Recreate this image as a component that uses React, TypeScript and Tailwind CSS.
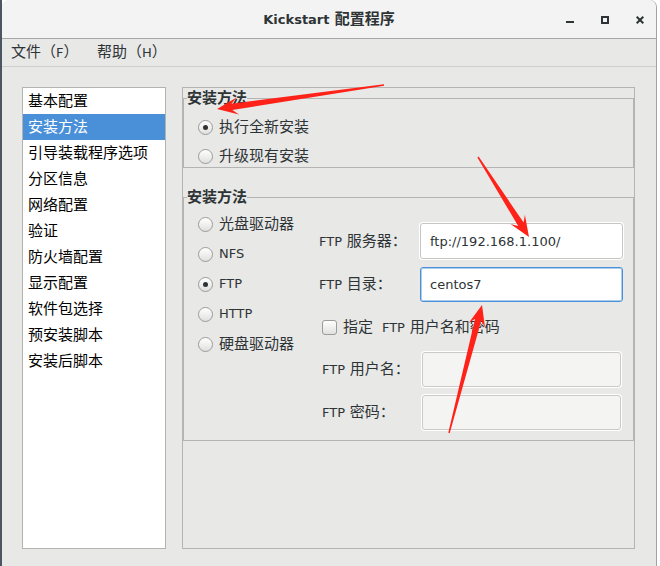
const navItems = [
  "基本配置",
  "安装方法",
  "引导装载程序选项",
  "分区信息",
  "网络配置",
  "验证",
  "防火墙配置",
  "显示配置",
  "软件包选择",
  "预安装脚本",
  "安装后脚本",
];

const mediaOptions = [
  { label: "光盘驱动器", checked: false },
  { label: "NFS", checked: false, latin: true },
  { label: "FTP", checked: true, latin: true },
  { label: "HTTP", checked: false, latin: true },
  { label: "硬盘驱动器", checked: false },
];

// red annotation arrows drawn over the screenshot
const arrows = [
  { from: [384, 85], to: [217, 109] },
  { from: [478, 157], to: [529, 237] },
  { from: [449, 433], to: [482, 305] },
];

function arrowPoints(from: number[], to: number[]) {
  const [x1, y1] = from;
  const [x2, y2] = to;
  const len = Math.hypot(x2 - x1, y2 - y1);
  const ux = (x2 - x1) / len;
  const uy = (y2 - y1) / len;
  const nx = -uy;
  const ny = ux;
  const headLen = 21;
  const headW = 8.5;
  const neckW = 3.2;
  const tailW = 0.7;
  const bx = x2 - ux * headLen;
  const by = y2 - uy * headLen;
  const kx = x2 - ux * headLen * 0.72;
  const ky = y2 - uy * headLen * 0.72;
  const pts = [
    [x1 + nx * tailW, y1 + ny * tailW],
    [kx + nx * neckW, ky + ny * neckW],
    [bx + nx * headW, by + ny * headW],
    [x2, y2],
    [bx - nx * headW, by - ny * headW],
    [kx - nx * neckW, ky - ny * neckW],
    [x1 - nx * tailW, y1 - ny * tailW],
  ];
  return pts.map((p) => `${p[0].toFixed(1)},${p[1].toFixed(1)}`).join(" ");
}

function Radio({ checked }: { checked: boolean }) {
  return (
    <span className="flex h-[15px] w-[15px] shrink-0 items-center justify-center rounded-full border border-[#9b9b9b] bg-linear-to-b from-white to-[#e0e0de]">
      {checked && <span className="h-[5px] w-[5px] rounded-full bg-[#2e3436]" />}
    </span>
  );
}

export default function App() {
  return (
    <div className="relative flex h-[566px] w-[660px] overflow-hidden bg-white font-['DejaVu_Sans','Noto_Sans_CJK_SC',sans-serif] text-[15px] text-[#2e3436]">
      <div className="w-[2px] bg-[#4b5662]" />
      <div className="flex w-[655px] flex-col rounded-t-[7px] border-r border-[#a3a3a3] bg-[#e8e8e7]">
        {/* title bar */}
        <div className="grid h-[39px] grid-cols-[1fr_auto_1fr] items-center rounded-t-[7px] border-b border-[#a6a6a6] bg-[#f3f3f3]">
          <div />
          <div className="font-bold">
            <span className="text-[13px]">Kickstart</span> 配置程序
          </div>
          <div className="flex items-center justify-end gap-[27px] pr-[12px] pt-[2px]">
            <svg width="8" height="8" viewBox="0 0 8 8">
              <rect x="0" y="5" width="8" height="2" fill="#2e3436" />
            </svg>
            <svg width="8" height="8" viewBox="0 0 8 8">
              <rect x="1" y="1" width="6" height="6" fill="none" stroke="#2e3436" strokeWidth="2" />
            </svg>
            <svg width="8" height="8" viewBox="0 0 8 8">
              <path d="M0.7 0.7L7.3 7.3M7.3 0.7L0.7 7.3" stroke="#2e3436" strokeWidth="2" />
            </svg>
          </div>
        </div>
        {/* menu bar */}
        <div className="flex h-[28px] items-center border-b border-[#cfcfcd] pl-[9px]">
          <span className="w-[86px]">
            文件（<span className="text-[13px]">F</span>）
          </span>
          <span>
            帮助（<span className="text-[13px]">H</span>）
          </span>
        </div>
        {/* body */}
        <div className="flex flex-1 gap-[16px] pb-[17px] pl-[20px] pr-[21px] pt-[20px]">
          <div className="w-[144px] border border-[#b3b3b0] bg-white">
            {navItems.map((item) => (
              <div
                key={item}
                className={`h-[26px] pl-[5px] leading-[26px] ${
                  item === "安装方法" ? "bg-[#4a90d9] text-white" : "text-black"
                }`}
              >
                {item}
              </div>
            ))}
          </div>
          <div className="flex flex-1 flex-col border border-[#b4b4b4]">
            {/* install type */}
            <fieldset className="mt-[2px] border border-[#b4b4b4] p-0">
              <legend className="ml-[3px] px-0 font-bold leading-[16px]">安装方法</legend>
              <div className="flex flex-col gap-[9px] pb-[1px] pl-[14px] pt-[11px]">
                <div className="flex h-[20px] items-center gap-[6px]">
                  <Radio checked />
                  执行全新安装
                </div>
                <div className="flex h-[20px] items-center gap-[6px]">
                  <Radio checked={false} />
                  升级现有安装
                </div>
              </div>
            </fieldset>
            {/* install media */}
            <fieldset className="mt-[21px] border border-[#b4b4b4] p-0">
              <legend className="ml-[3px] px-0 font-bold leading-[16px]">安装方法</legend>
              <div className="flex">
                <div className="flex w-[135px] flex-col pl-[14px] pt-[4px]">
                  {mediaOptions.map((opt) => (
                    <div key={opt.label} className="flex h-[30px] items-center gap-[6px]">
                      <Radio checked={opt.checked} />
                      <span className={opt.latin ? "text-[13px]" : ""}>{opt.label}</span>
                    </div>
                  ))}
                </div>
                <div className="flex flex-1 flex-col pb-[10px] pr-[10px] pt-[18px]">
                  <div className="grid h-[36px] grid-cols-[101px_1fr] items-center">
                    <span>
                      <span className="text-[13px]">FTP</span> 服务器：
                    </span>
                    <input
                      readOnly
                      defaultValue="ftp://192.168.1.100/"
                      className="h-[36px] w-full rounded-[3px] border border-[#c6c6c4] bg-white pl-[9px] text-[13px] text-[#2e3436] shadow-[0_0_0_1px_#fff] outline-none"
                    />
                  </div>
                  <div className="mt-[8px] grid h-[35px] grid-cols-[101px_1fr] items-center">
                    <span>
                      <span className="text-[13px]">FTP</span> 目录：
                    </span>
                    <input
                      readOnly
                      defaultValue="centos7"
                      className="h-[35px] w-full rounded-[3px] border border-[#4a90d9] bg-white pl-[9px] text-[13px] text-[#2e3436] shadow-[inset_0_0_0_1px_rgba(74,144,217,0.45)] outline-none"
                    />
                  </div>
                  <div className="mt-[15px] flex h-[20px] items-center gap-[6px] pl-[3px]">
                    <span className="h-[15px] w-[15px] rounded-[3px] border border-[#9b9b9b] bg-linear-to-b from-white to-[#e0e0de]" />
                    <span className="whitespace-pre">
                      指定 <span className="text-[13px]"> FTP</span> 用户名和密码
                    </span>
                  </div>
                  <div className="mt-[15px] flex flex-col gap-[8px] pl-[3px] pr-[2px]">
                    <div className="grid h-[35px] grid-cols-[100px_1fr] items-center">
                      <span>
                        <span className="text-[13px]">FTP</span> 用户名：
                      </span>
                      <div className="h-[35px] rounded-[3px] border border-[#cdc9c4] bg-[#f4f4f3] shadow-[0_0_0_1px_#fff]" />
                    </div>
                    <div className="grid h-[35px] grid-cols-[100px_1fr] items-center">
                      <span>
                        <span className="text-[13px]">FTP</span> 密码：
                      </span>
                      <div className="h-[35px] rounded-[3px] border border-[#cdc9c4] bg-[#f4f4f3] shadow-[0_0_0_1px_#fff]" />
                    </div>
                  </div>
                </div>
              </div>
            </fieldset>
          </div>
        </div>
      </div>
      <div className="w-[3px] bg-white" />
      <svg className="pointer-events-none absolute left-0 top-0" width="660" height="566">
        {arrows.map((a, i) => (
          <polygon key={i} points={arrowPoints(a.from, a.to)} fill="#ff2219" />
        ))}
      </svg>
    </div>
  );
}
